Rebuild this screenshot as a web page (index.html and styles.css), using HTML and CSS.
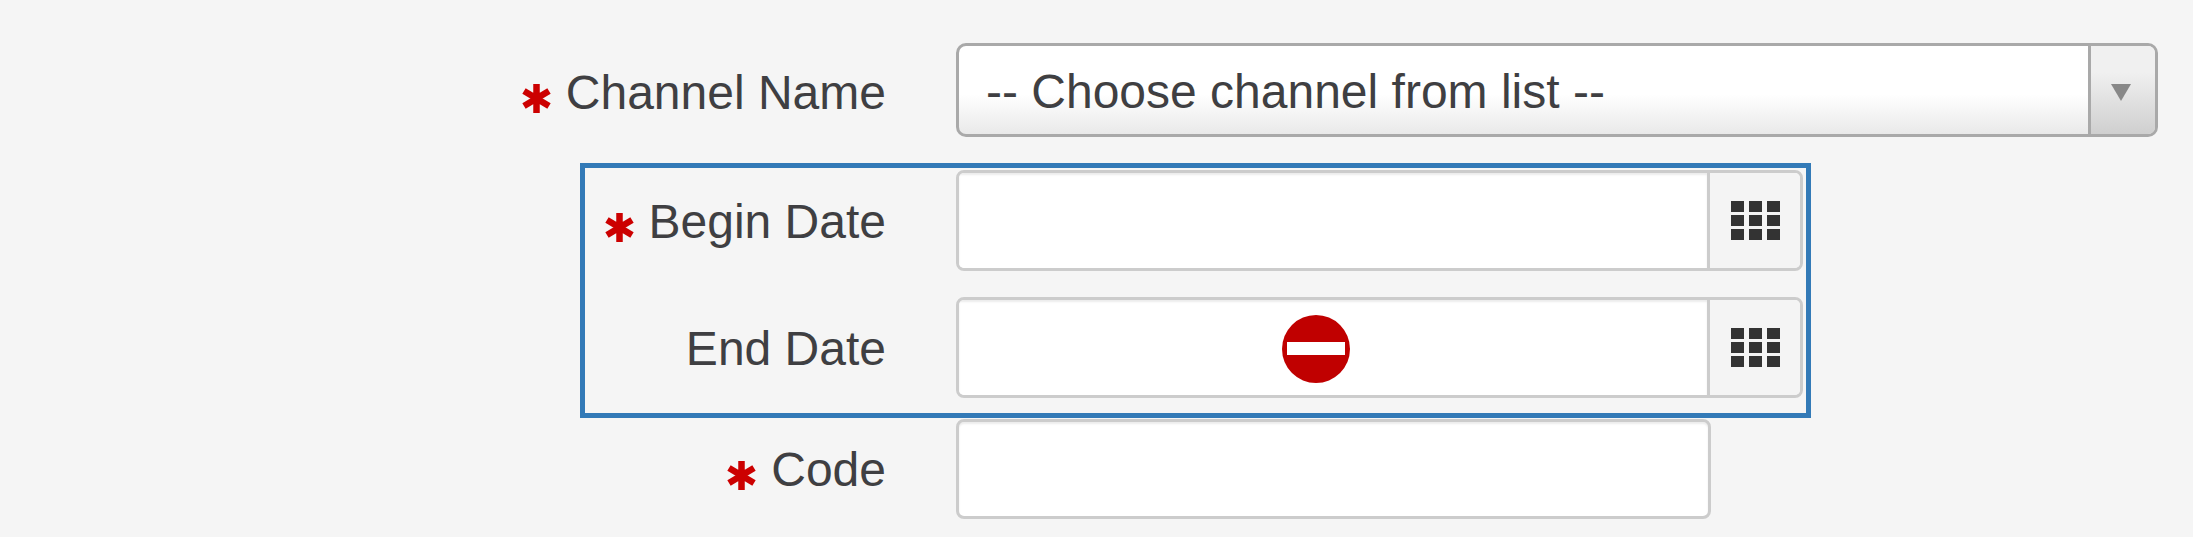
FILE: index.html
```html
<!DOCTYPE html>
<html lang="en">

<head>
    <meta charset="UTF-8">
    <meta name="viewport" content="width=device-width, initial-scale=1.0">
    <title>Channel</title>
    <link rel="stylesheet" href="styles.css">
</head>

<body>
    <svg class="defs" width="0" height="0">
        <symbol id="star" viewBox="0 0 29 31">
            <path d="M14.500 1v29M2 8l25 15M27 8L2 23" stroke="#cc0000" stroke-width="6.500" fill="none" />
        </symbol>
        <symbol id="grid" viewBox="0 0 49 39">
            <path d="M0 0h13v11H0zM18 0h13v11H18zM36 0h13v11H36zM0 14h13v11H0zM18 14h13v11H18zM36 14h13v11H36zM0 28h13v11H0zM18 28h13v11H18zM36 28h13v11H36z" fill="#333" />
        </symbol>
    </svg>

    <form class="form">
        <div class="row">
            <label class="label label-channel"><svg class="star"><use href="#star" /></svg>Channel Name</label>
            <div class="select">
                <div class="select-text">-- Choose channel from list --</div>
                <div class="select-arrow"><span class="caret"></span></div>
            </div>
        </div>

        <div class="group">
            <div class="row">
                <label class="label label-begin"><svg class="star"><use href="#star" /></svg>Begin Date</label>
                <div class="date">
                    <input class="date-input" type="text">
                    <span class="date-btn"><svg class="grid"><use href="#grid" /></svg></span>
                </div>
            </div>
            <div class="row">
                <label class="label label-end">End Date</label>
                <div class="date">
                    <input class="date-input" type="text">
                    <span class="date-btn"><svg class="grid"><use href="#grid" /></svg></span>
                </div>
            </div>
        </div>

        <div class="row row-code">
            <label class="label"><svg class="star"><use href="#star" /></svg>Code</label>
            <input class="text-input" type="text">
        </div>
    </form>

    <!-- not-allowed cursor from the screenshot -->
    <svg class="cursor" viewBox="0 0 68 68">
        <circle cx="34" cy="34" r="34" fill="#c00000" />
        <rect x="5" y="27" width="58" height="13" fill="#fff" />
    </svg>
</body>

</html>
```

FILE: styles.css
```css
body {
    margin: 0;
    background: #f5f5f5;
    font-family: "Liberation Sans", Arial, sans-serif;
    font-size: 48px;
    color: #3f3f42;
}

.defs {
    position: absolute;
}

.form {
    display: flex;
    flex-direction: column;
    padding-top: 43px;
}

.row {
    display: flex;
    gap: 70px;
    align-items: center;
}

.label {
    width: 886px;
    text-align: right;
    white-space: nowrap;
}

.label-channel {
    padding-top: 5px;
}

.label-begin {
    padding-top: 2px;
}

.label-end {
    padding-top: 2px;
}

.star {
    width: 29px;
    height: 31px;
    margin-right: 15px;
    vertical-align: -5px;
}

.select {
    display: flex;
    width: 1202px;
    height: 94px;
    box-sizing: border-box;
    border: 3px solid #a9a9a9;
    border-radius: 10px;
    overflow: hidden;
    background: linear-gradient(#fff 55%, #e9e9e9);
}

.select-text {
    flex: 1;
    padding-left: 27px;
    line-height: 92px;
}

.select-arrow {
    display: flex;
    justify-content: center;
    align-items: center;
    width: 67px;
    padding-top: 4px;
    padding-right: 4px;
    box-sizing: border-box;
    border-left: 3px solid #a9a9a9;
    background: linear-gradient(#f0f0f0 30%, #cfcfcf);
}

.caret {
    border-top: 17px solid #888;
    border-left: 10px solid transparent;
    border-right: 10px solid transparent;
}

.group {
    display: flex;
    flex-direction: column;
    gap: 26px;
    width: 1231px;
    box-sizing: border-box;
    margin: 26px 0 1px 580px;
    padding: 2px 0 15px;
    border: 5px solid #337ab7;
}

.group .label {
    width: 301px;
}

.date {
    display: flex;
    width: 847px;
    height: 101px;
    box-sizing: border-box;
    border: 3px solid #ccc;
    border-radius: 8px;
    overflow: hidden;
}

.date-input {
    flex: 1;
    min-width: 0;
    padding: 0;
    border: none;
    background: #fff;
    box-shadow: inset 0 2px 2px rgba(0, 0, 0, 0.08);
}

.date-btn {
    display: flex;
    justify-content: center;
    align-items: center;
    width: 93px;
    flex: none;
    box-sizing: border-box;
    border-left: 3px solid #ccc;
    background: #f4f4f4;
}

.grid {
    width: 49px;
    height: 39px;
}

.text-input {
    width: 755px;
    height: 100px;
    box-sizing: border-box;
    padding: 0;
    border: 3px solid #ccc;
    border-radius: 8px;
    background: #fff;
    box-shadow: inset 0 2px 2px rgba(0, 0, 0, 0.08);
}

.cursor {
    position: absolute;
    left: 1282px;
    top: 315px;
    width: 68px;
    height: 68px;
}
```
